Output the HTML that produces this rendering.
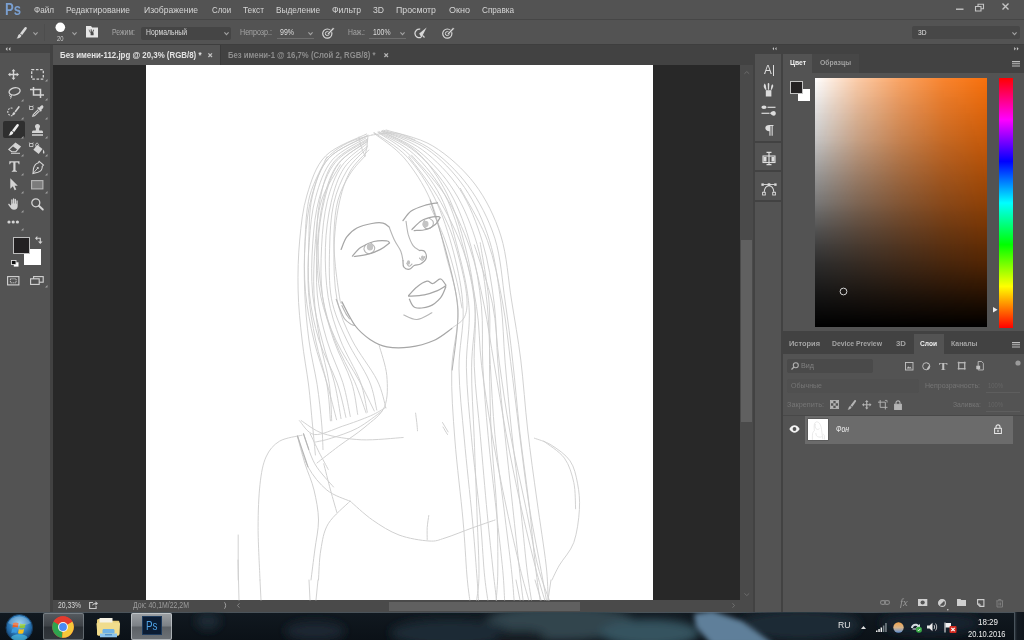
<!DOCTYPE html>
<html lang="ru"><head><meta charset="utf-8"><title>Photoshop</title>
<style>
html,body{margin:0;padding:0;}
body{width:1024px;height:640px;overflow:hidden;background:#535353;position:relative;font-family:"Liberation Sans", sans-serif;}
#r div{position:absolute;}
#t span{position:absolute;white-space:nowrap;line-height:1;transform-origin:0 50%;}
#s svg{position:absolute;overflow:visible;}
</style></head><body>
<div id="r">
<div style="left:0px;top:0px;width:1024px;height:20px;background:#535353;"></div>
<div style="left:0px;top:19.2px;width:1024px;height:1.3px;background:#464646;"></div>
<div style="left:0px;top:21px;width:1024px;height:23px;background:#535353;"></div>
<div style="left:0px;top:44px;width:1024px;height:1px;background:#3e3e3e;"></div>
<div style="left:0px;top:45px;width:53px;height:567px;background:#424242;"></div>
<div style="left:0px;top:45px;width:50px;height:8px;background:#454545;"></div>
<div style="left:0px;top:53px;width:50px;height:559px;background:#535353;"></div>
<div style="left:53px;top:45px;width:702px;height:20px;background:#424242;"></div>
<div style="left:53px;top:45px;width:166.5px;height:20px;background:#535353;"></div>
<div style="left:219.5px;top:45px;width:1px;height:20px;background:#3a3a3a;"></div>
<div style="left:53px;top:65px;width:687px;height:535px;background:#282828;"></div>
<div style="left:146px;top:65.3px;width:506.6px;height:534.7px;background:#ffffff;"></div>
<div style="left:740px;top:65px;width:13px;height:535px;background:#4a4a4a;"></div>
<div style="left:741px;top:240px;width:11px;height:182px;background:#606060;"></div>
<div style="left:53px;top:600px;width:702px;height:12px;background:#4a4a4a;"></div>
<div style="left:389px;top:601.5px;width:191px;height:9px;background:#606060;"></div>
<div style="left:753px;top:45px;width:2px;height:567px;background:#424242;"></div>
<div style="left:755px;top:45px;width:28px;height:9px;background:#424242;"></div>
<div style="left:755px;top:54px;width:26px;height:558px;background:#535353;"></div>
<div style="left:781px;top:45px;width:2px;height:567px;background:#424242;"></div>
<div style="left:783px;top:45px;width:241px;height:9px;background:#424242;"></div>
<div style="left:783px;top:54px;width:241px;height:19px;background:#424242;"></div>
<div style="left:812px;top:54px;width:47px;height:19px;background:#474747;"></div>
<div style="left:783px;top:54px;width:29px;height:19px;background:#535353;"></div>
<div style="left:783px;top:73px;width:241px;height:258px;background:#535353;"></div>
<div style="left:783px;top:331px;width:241px;height:3px;background:#424242;"></div>
<div style="left:783px;top:334px;width:241px;height:20px;background:#424242;"></div>
<div style="left:914px;top:334px;width:30px;height:20px;background:#535353;"></div>
<div style="left:783px;top:354px;width:241px;height:258px;background:#535353;"></div>
<div style="left:43.5px;top:24px;width:1px;height:17px;background:#4d4d4d;"></div>
<div style="left:141px;top:26.5px;width:90px;height:13.5px;background:#454545;border-radius:2px;"></div>
<div style="left:277px;top:38px;width:37px;height:1px;background:#6e6e6e;"></div>
<div style="left:369px;top:38px;width:37px;height:1px;background:#6e6e6e;"></div>
<div style="left:912px;top:26px;width:108px;height:13px;background:#474747;border-radius:2px;"></div>
<div style="left:3px;top:121px;width:22px;height:17px;background:#2f2f2f;border-radius:2px;"></div>
<div style="left:23.5px;top:248.8px;width:17.4px;height:16.4px;background:#ffffff;"></div>
<div style="left:13.7px;top:238px;width:15.4px;height:14.5px;background:#232122;box-shadow:0 0 0 1px #bdbdbd;"></div>
<div style="left:755px;top:141px;width:26px;height:2px;background:#424242;"></div>
<div style="left:755px;top:170px;width:26px;height:2px;background:#424242;"></div>
<div style="left:755px;top:200px;width:26px;height:2px;background:#424242;"></div>
<div style="left:772.8px;top:64.8px;width:1px;height:11px;background:#dcdcdc;"></div>
<div style="left:797.5px;top:88.5px;width:12.5px;height:12.5px;background:#ffffff;"></div>
<div style="left:790.5px;top:81.5px;width:11.5px;height:11px;background:#232122;box-shadow:0 0 0 1px #c4c4c4;"></div>
<div style="left:815px;top:77.5px;width:172px;height:249.5px;background:#f8700c;background-image:linear-gradient(to bottom,rgba(0,0,0,0) 0%,rgba(0,0,0,.20) 25%,rgba(0,0,0,.42) 50%,rgba(0,0,0,.68) 75%,rgba(0,0,0,.88) 90%,#000 100%),linear-gradient(to right,#fff 0%,rgba(255,255,255,.64) 25%,rgba(255,255,255,.36) 50%,rgba(255,255,255,.14) 75%,rgba(255,255,255,0) 100%);"></div>
<div style="left:815px;top:77.5px;width:172px;height:249.5px;background:transparent;background-image:linear-gradient(to bottom,rgba(0,0,0,0) 0%,rgba(0,0,0,.03) 25%,rgba(0,0,0,.19) 50%,rgba(0,0,0,.47) 75%,rgba(0,0,0,.5) 100%);-webkit-mask-image:linear-gradient(to right,#000,transparent);mask-image:linear-gradient(to right,#000,transparent);"></div>
<div style="left:998.5px;top:77.5px;width:14.5px;height:250px;background:#f00;background:linear-gradient(to bottom,#f00 0%,#f0f 16.670%,#00f 33.330%,#0ff 50%,#0f0 66.670%,#ff0 83.330%,#f00 100%);"></div>
<div style="left:787px;top:359px;width:86px;height:13.5px;background:#4a4a4a;border-radius:2px;"></div>
<div style="left:787px;top:379px;width:132px;height:13.5px;background:#505050;border-radius:2px;"></div>
<div style="left:986px;top:392px;width:34px;height:1px;background:#5e5e5e;"></div>
<div style="left:986px;top:411px;width:34px;height:1px;background:#5e5e5e;"></div>
<div style="left:783px;top:415px;width:241px;height:1px;background:#484848;"></div>
<div style="left:805px;top:416px;width:208px;height:27.5px;background:#6b6b6b;"></div>
<div style="left:808px;top:418.5px;width:19.5px;height:21.5px;background:#ffffff;box-shadow:0 0 0 .5px #4a4a4a;"></div>
<div style="left:0px;top:612px;width:1024px;height:28px;background:#0d141a;background:linear-gradient(to bottom,#111920,#0b1117);"></div>
<div style="left:0px;top:611.6px;width:1024px;height:1.2px;background:#4a535a;"></div>
<div style="left:43px;top:613px;width:41px;height:27px;background:#3c4146;border-radius:2px;background:linear-gradient(to bottom,#565b60 0%,#3d4247 48%,#2b3035 52%,#33383d 100%);box-shadow:inset 0 0 0 1px rgba(160,170,178,.45);"></div>
<div style="left:131px;top:613px;width:41px;height:27px;background:#7a7f84;border-radius:2px;background:linear-gradient(to bottom,#9da1a5 0%,#7c8186 48%,#5c6166 52%,#6d7277 100%);box-shadow:inset 0 0 0 1px rgba(215,220,224,.6);"></div>
<div style="left:142px;top:616.3px;width:19.5px;height:18.5px;background:#0b1c33;box-shadow:inset 0 0 0 1px #1d3a5c;"></div>
<div style="left:1014px;top:612px;width:10px;height:28px;background:#1a232b;background:linear-gradient(to right,#3a444c,#141b22 30%,#0f151b);box-shadow:inset 1px 0 0 #4a545c;"></div>
</div>
<div id="s">
<svg style="left:951px;top:0" width="73" height="16" viewBox="0 0 73 16"><g fill="none" stroke="#c4c4c4" stroke-width="1.4"><path d="M5 9.2h7.5"/><path d="M24.5 6.5h5.5v4.5h-5.5z M27 6.5v-2.3h5.5v4.5H30" stroke-width="1.1"/><path d="M51.5 3.5l6 6M57.5 3.5l-6 6"/></g></svg>
<svg style="left:16px;top:27px" width="11" height="12" viewBox="0 0 11 12"><path d="M10.300 0.200c.6.400.7 1.100.3 1.700L6.200 7.900 4 6.400 8.600.5c.5-.6 1.200-.700 1.700-.3z" fill="#d8d8d8"/><path d="M3.7 7.1l1.7 1.2c-.2 1.6-1.6 3-4.9 3.3 1.3-1 1.2-2 1.6-3 .3-.8.9-1.3 1.6-1.5z" fill="#d8d8d8"/></svg>
<svg style="left:33.0px;top:32.0px" width="5" height="3.2" viewBox="0 0 5 3.2"><path d="M0.4 0.4L2.5 2.700 4.600 0.400" fill="none" stroke="#a4a4a4" stroke-width="1.100"/></svg>
<svg style="left:55px;top:22px" width="11" height="11"><circle cx="5.3" cy="5.3" r="4.8" fill="#fff"/></svg>
<svg style="left:72.0px;top:32.0px" width="5" height="3.2" viewBox="0 0 5 3.2"><path d="M0.4 0.4L2.5 2.700 4.600 0.400" fill="none" stroke="#a4a4a4" stroke-width="1.100"/></svg>
<svg style="left:86px;top:26px" width="12" height="12" viewBox="0 0 12 12"><path d="M0 0h5l1.2 1.4H12V11.6H0z" fill="#e6e6e6"/><path d="M3.2 3.5l.9 2.3h.6V3.2l.9.1.3 2.5h.5l.8-2.2.8.3-.9 2.6H7.6v2.8H4.6V6.5H3.9L2.6 3.8z" fill="#4a4a4a"/></svg>
<svg style="left:224.0px;top:31.5px" width="5" height="3.2" viewBox="0 0 5 3.2"><path d="M0.4 0.4L2.5 2.700 4.600 0.400" fill="none" stroke="#a4a4a4" stroke-width="1.100"/></svg>
<svg style="left:307.5px;top:31.5px" width="5" height="3.2" viewBox="0 0 5 3.2"><path d="M0.4 0.4L2.5 2.700 4.600 0.400" fill="none" stroke="#a4a4a4" stroke-width="1.100"/></svg>
<svg style="left:322px;top:26.5px" width="13" height="12" viewBox="0 0 13 12"><g fill="none" stroke="#d8d8d8"><circle cx="5.3" cy="6.6" r="4.6" stroke-width="1.2"/><circle cx="5.3" cy="6.6" r="2" stroke-width="1"/></g><path d="M5 7l6-6.6 1.5 1.3L6.3 8z" fill="#d8d8d8" stroke="#535353" stroke-width=".6"/></svg>
<svg style="left:400.0px;top:31.5px" width="5" height="3.2" viewBox="0 0 5 3.2"><path d="M0.4 0.4L2.5 2.700 4.600 0.400" fill="none" stroke="#a4a4a4" stroke-width="1.100"/></svg>
<svg style="left:414px;top:26.5px" width="14" height="12" viewBox="0 0 14 12"><path d="M6.2 2.2A4.3 4.3 0 1 0 7 10.3" fill="none" stroke="#d8d8d8" stroke-width="1.3"/><path d="M12.6.6L5.2 6.4l2.2 4.3z" fill="#d8d8d8"/><path d="M8.5 8.3l2 2.2" stroke="#d8d8d8" stroke-width="1.2"/></svg>
<svg style="left:442px;top:26.5px" width="13" height="12" viewBox="0 0 13 12"><g fill="none" stroke="#d8d8d8"><circle cx="5.3" cy="6.6" r="4.6" stroke-width="1.2"/><circle cx="5.3" cy="6.6" r="2" stroke-width="1"/></g><path d="M5 7l6-6.6 1.5 1.3L6.3 8z" fill="#d8d8d8" stroke="#535353" stroke-width=".6"/></svg>
<svg style="left:1012.0px;top:31.5px" width="5" height="3.2" viewBox="0 0 5 3.2"><path d="M0.4 0.4L2.5 2.700 4.600 0.400" fill="none" stroke="#a4a4a4" stroke-width="1.100"/></svg>
<svg style="left:5px;top:47px" width="6" height="4" viewBox="0 0 6 4"><path d="M2.4 0L.6 2l1.8 2zM5.4 0L3.6 2l1.8 2z" fill="#c8c8c8"/></svg>
<svg style="left:8px;top:69px" width="11" height="11" viewBox="0 0 11 11"><path d="M5.5 0l2 2.3H6.2v2.5h2.5V3.5L11 5.5 8.7 7.5V6.2H6.2v2.5h1.3L5.5 11 3.5 8.7h1.3V6.2H2.3v1.3L0 5.5l2.3-2V4.8h2.5V2.3H3.5z" fill="#d4d4d4"/></svg>
<svg style="left:31px;top:68.5px" width="13" height="11" viewBox="0 0 13 11"><rect x=".7" y=".7" width="11.6" height="9.4" fill="none" stroke="#d4d4d4" stroke-width="1.3" stroke-dasharray="2.6 1.6"/></svg>
<svg style="left:44.5px;top:78.5px" width="2.5" height="2.5" viewBox="0 0 2.5 2.5"><path d="M2.5 0V2.5H0z" fill="#a0a0a0"/></svg>
<svg style="left:8px;top:87px" width="13" height="12" viewBox="0 0 13 12"><ellipse cx="6.6" cy="4.4" rx="5.6" ry="3.6" fill="none" stroke="#d4d4d4" stroke-width="1.3" transform="rotate(-12 6.6 4.4)"/><path d="M2.6 7.2c-1 .4-1.3 1.3-.6 2 .8.6 1.6.2 1.5-.6-.1-.7-.5-1.3-.9-1.4zM3 9c.2 1 .1 1.800-.5 2.600" fill="none" stroke="#d4d4d4" stroke-width="1"/></svg>
<svg style="left:20.5px;top:98.5px" width="2.5" height="2.5" viewBox="0 0 2.5 2.5"><path d="M2.5 0V2.5H0z" fill="#a0a0a0"/></svg>
<svg style="left:30px;top:86.5px" width="14" height="11" viewBox="0 0 14 11"><path d="M3.500 0v8h10.500M0 2.500h10.500v8.500" fill="none" stroke="#d4d4d4" stroke-width="1.500"/></svg>
<svg style="left:44.5px;top:97.5px" width="2.5" height="2.5" viewBox="0 0 2.5 2.5"><path d="M2.5 0V2.5H0z" fill="#a0a0a0"/></svg>
<svg style="left:7px;top:106px" width="13" height="11" viewBox="0 0 13 11"><path d="M5.500 2.200c-2.500-.7-4.700 1-4.700 3.500 0 2.500 2 4.300 4.500 4" fill="none" stroke="#d4d4d4" stroke-width="1.100" stroke-dasharray="1.800 1.200"/><path d="M12.300.2c.5.300.5.800.2 1.300L8.700 6.400 7.500 5.500 11.200.5c.3-.4.800-.5 1.100-.3zM7 6l1.300 1c-.2 1.300-1.300 2.300-3.800 2.500 1-.8.900-1.500 1.200-2.300.3-.6.700-1 1.300-1.200z" fill="#d4d4d4"/></svg>
<svg style="left:20.5px;top:116.5px" width="2.5" height="2.5" viewBox="0 0 2.5 2.5"><path d="M2.5 0V2.5H0z" fill="#a0a0a0"/></svg>
<svg style="left:29px;top:105px" width="15" height="12" viewBox="0 0 15 12"><path d="M13.800.6c.9.800.8 1.800.1 2.600l-1.700 1.700.7.700-1.100 1.100-3.600-3.600 1.100-1.100.7.700L11.700.9c.7-.7 1.500-.9 2.100-.3z" fill="#d4d4d4"/><path d="M9.300 4.600L4.300 9.600l-.6 1.700 1.800-.500 5-5" fill="none" stroke="#d4d4d4" stroke-width="1.100"/><path d="M.5 1.500h3.500v3H.5zM1 1.500L.3.500M3.500 1.500l.7-1" fill="none" stroke="#d4d4d4" stroke-width=".8"/></svg>
<svg style="left:44.5px;top:116.5px" width="2.5" height="2.5" viewBox="0 0 2.5 2.5"><path d="M2.5 0V2.5H0z" fill="#a0a0a0"/></svg>
<svg style="left:8px;top:123.5px" width="11" height="12" viewBox="0 0 11 12"><path d="M10.300 0.200c.6.400.7 1.100.3 1.700L6.200 7.900 4 6.400 8.600.5c.5-.6 1.200-.700 1.700-.3z" fill="#ececec"/><path d="M3.7 7.1l1.7 1.2c-.2 1.6-1.6 3-4.9 3.3 1.3-1 1.2-2 1.6-3 .3-.8.9-1.3 1.6-1.5z" fill="#ececec"/></svg>
<svg style="left:20.5px;top:135.5px" width="2.5" height="2.5" viewBox="0 0 2.5 2.5"><path d="M2.5 0V2.5H0z" fill="#a0a0a0"/></svg>
<svg style="left:32px;top:123.5px" width="11" height="12" viewBox="0 0 11 12"><path d="M5.500 0c1.500 0 2.500 1 2.500 2.300 0 1-.5 1.500-.8 2.200-.2.500-.1 1.500.1 2.000h2.200c.8 0 1.500.7 1.500 1.500v1.000H0v-1.000c0-.8.700-1.500 1.500-1.500h2.200c.2-.5.300-1.500.1-2.000C3.500 3.800 3 3.300 3 2.300 3 1 4 0 5.500 0zM0 10.200h11v1.500H0z" fill="#d4d4d4"/></svg>
<svg style="left:44.5px;top:135.5px" width="2.5" height="2.5" viewBox="0 0 2.5 2.5"><path d="M2.5 0V2.5H0z" fill="#a0a0a0"/></svg>
<svg style="left:8px;top:143px" width="13" height="11" viewBox="0 0 13 11"><path d="M7.500.3l4.800 3.400-4.500 5H3.800L.8 6.500z" fill="none" stroke="#d4d4d4" stroke-width="1.100"/><path d="M7.500.3l4.800 3.400-2.700 3-4.800-3.400z" fill="#d4d4d4"/><path d="M3 10.300h9" stroke="#d4d4d4" stroke-width="1"/></svg>
<svg style="left:20.5px;top:153.5px" width="2.5" height="2.5" viewBox="0 0 2.5 2.5"><path d="M2.5 0V2.5H0z" fill="#a0a0a0"/></svg>
<svg style="left:29px;top:141.5px" width="16" height="13" viewBox="0 0 16 13"><path d="M.5 1.500h3.500v3H.5zM1 1.500L.3.500M3.500 1.500l.7-1" fill="none" stroke="#d4d4d4" stroke-width=".8"/><path d="M8.200 2.800l5.300 4.200-3.800 5-5.300-4.200z" fill="#d4d4d4"/><path d="M7 4.500c-.8-1.500-.3-3 .8-3.300 1-.2 1.800.8 2 2.500" fill="none" stroke="#d4d4d4" stroke-width=".9"/><path d="M14.300 7.500c.8 1.300 1.300 2.500 1.100 3.500-.2.800-1.200.8-1.400 0-.2-.8 0-2 .3-3.500z" fill="#d4d4d4"/></svg>
<svg style="left:44.5px;top:153.5px" width="2.5" height="2.5" viewBox="0 0 2.5 2.5"><path d="M2.5 0V2.5H0z" fill="#a0a0a0"/></svg>
<svg style="left:9px;top:161px" width="11" height="11" viewBox="0 0 11 11"><path d="M.3.200h10.200v3h-.9c-.1-1-.5-1.700-1.600-1.700H6.500v7.300c0 .8.300 1.100 1.500 1.200v.8H2.800V10c1.200-.1 1.500-.4 1.500-1.200V1.500H2.800c-1.100 0-1.500.7-1.600 1.700H.3z" fill="#d4d4d4"/></svg>
<svg style="left:20.5px;top:172.5px" width="2.5" height="2.5" viewBox="0 0 2.5 2.5"><path d="M2.5 0V2.5H0z" fill="#a0a0a0"/></svg>
<svg style="left:32px;top:161px" width="12" height="13" viewBox="0 0 12 13"><path d="M7.200.3l4.300 3.700-1.300 1.400c.3 2.500-1 4.800-4.300 5.800L1 12.500l.5-5C2.300 4.300 4 2.500 6 2z" fill="none" stroke="#d4d4d4" stroke-width="1.100"/><path d="M1.200 12.300l4-4.600" stroke="#d4d4d4" stroke-width=".9"/><circle cx="5.800" cy="7" r="1.100" fill="#d4d4d4"/></svg>
<svg style="left:44.5px;top:172.5px" width="2.5" height="2.5" viewBox="0 0 2.5 2.5"><path d="M2.5 0V2.5H0z" fill="#a0a0a0"/></svg>
<svg style="left:9.5px;top:178px" width="8" height="12.5" viewBox="0 0 8 12.5"><path d="M.3.300v10.500l2.600-2.600 1.700 4 1.700-.7L4.600 7.700h3.200z" fill="#d4d4d4"/></svg>
<svg style="left:20.5px;top:190.5px" width="2.5" height="2.5" viewBox="0 0 2.5 2.5"><path d="M2.5 0V2.5H0z" fill="#a0a0a0"/></svg>
<svg style="left:31px;top:180px" width="12.5" height="9.5" viewBox="0 0 12.5 9.5"><rect x=".6" y=".6" width="11.300" height="8.300" fill="#7c7c7c" stroke="#b8b8b8" stroke-width="1.100"/></svg>
<svg style="left:44.5px;top:190.5px" width="2.5" height="2.5" viewBox="0 0 2.5 2.5"><path d="M2.5 0V2.5H0z" fill="#a0a0a0"/></svg>
<svg style="left:8px;top:197.5px" width="12" height="12" viewBox="0 0 12 12"><path d="M3.200 6.200V2c0-.9 1.300-.9 1.300 0v3.500h.4V.9c0-.9 1.400-.9 1.400 0v4.600h.4V1.500c0-.9 1.300-.9 1.300 0v4.300h.4V3c0-.9 1.300-.9 1.300 0v5c0 2.300-1.200 3.800-3.700 3.800-1.700 0-2.700-.7-3.500-2L.3 6.800c-.4-.8.600-1.500 1.200-.7l1 1.500z" fill="#d4d4d4"/></svg>
<svg style="left:20.5px;top:209.5px" width="2.5" height="2.5" viewBox="0 0 2.5 2.5"><path d="M2.5 0V2.5H0z" fill="#a0a0a0"/></svg>
<svg style="left:31px;top:198px" width="12.5" height="12" viewBox="0 0 12.5 12"><circle cx="4.800" cy="4.800" r="4" fill="none" stroke="#d4d4d4" stroke-width="1.300"/><path d="M7.800 7.800l4 3.700" stroke="#d4d4d4" stroke-width="1.900" stroke-linecap="round"/></svg>
<svg style="left:7px;top:220px" width="12" height="4" viewBox="0 0 12 4"><circle cx="2" cy="2" r="1.600" fill="#d4d4d4"/><circle cx="6.200" cy="2" r="1.600" fill="#d4d4d4"/><circle cx="10.400" cy="2" r="1.600" fill="#d4d4d4"/></svg>
<svg style="left:20.5px;top:227.5px" width="2.5" height="2.5" viewBox="0 0 2.5 2.5"><path d="M2.5 0V2.5H0z" fill="#a0a0a0"/></svg>
<svg style="left:35px;top:235.5px" width="8" height="8" viewBox="0 0 8 8"><path d="M1.500 2.300h3.800v4" fill="none" stroke="#d4d4d4" stroke-width="1.100"/><path d="M2.300 0v4.600L0 2.300zM3 5.500h4.600L5.300 8z" fill="#d4d4d4"/></svg>
<svg style="left:11px;top:260px" width="8" height="7" viewBox="0 0 8 7"><rect x="2.800" y="2.300" width="4.700" height="4.300" fill="#fff"/><rect x=".5" y=".5" width="4.500" height="4" fill="#111" stroke="#ddd" stroke-width=".9"/></svg>
<svg style="left:7px;top:275.5px" width="12.5" height="9.5" viewBox="0 0 12.5 9.5"><rect x=".6" y=".6" width="11.300" height="8.300" fill="none" stroke="#d4d4d4" stroke-width="1.100"/><rect x="3.400" y="2.800" width="5.700" height="4" fill="none" stroke="#d4d4d4" stroke-width=".9" stroke-dasharray="1.200 .8"/></svg>
<svg style="left:30px;top:276px" width="14" height="9" viewBox="0 0 14 9"><rect x="3.600" y=".6" width="9.600" height="5.600" fill="none" stroke="#d4d4d4" stroke-width="1.100"/><rect x=".6" y="2.800" width="8.600" height="5.600" fill="#535353" stroke="#d4d4d4" stroke-width="1.100"/></svg>
<svg style="left:44.5px;top:284.5px" width="2.5" height="2.5" viewBox="0 0 2.5 2.5"><path d="M2.5 0V2.5H0z" fill="#a0a0a0"/></svg>
<svg style="left:207.8px;top:53px" width="4.4" height="4.4" viewBox="0 0 4.4 4.4"><path d="M.4.4l3.600 3.600M4 .4L.4 4" stroke="#c0c0c0" stroke-width="1.300"/></svg>
<svg style="left:383.6px;top:53px" width="4.4" height="4.4" viewBox="0 0 4.4 4.4"><path d="M.4.4l3.600 3.600M4 .4L.4 4" stroke="#b4b4b4" stroke-width="1.300"/></svg>
<svg style="left:89px;top:601px" width="9" height="8" viewBox="0 0 9 8"><path d="M4 1.500H.6v6h6.500V5" fill="none" stroke="#c8c8c8" stroke-width="1.100"/><path d="M3 5c.3-2 1.500-3 3.500-3V.3L9 2.600 6.500 4.800V3.300C5 3.300 3.800 3.800 3 5z" fill="#c8c8c8"/></svg>
<svg style="left:224px;top:602px" width="3" height="7" viewBox="0 0 3 7"><path d="M.5.3c1.500 2 1.500 4.400 0 6.400" fill="none" stroke="#a0a0a0" stroke-width="1"/></svg>
<svg style="left:237px;top:603px" width="3" height="5" viewBox="0 0 3 5"><path d="M2.500.3L.5 2.500l2 2.200" fill="none" stroke="#8a8a8a" stroke-width=".9"/></svg>
<svg style="left:732px;top:603px" width="3" height="5" viewBox="0 0 3 5"><path d="M.5.300L2.500 2.500.5 4.700" fill="none" stroke="#747474" stroke-width=".9"/></svg>
<svg style="left:744px;top:70.5px" width="5.6" height="3.2" viewBox="0 0 7 4"><path d="M.5 3.500L3.500.7 6.500 3.500" fill="none" stroke="#6c6c6c" stroke-width="1.200"/></svg>
<svg style="left:744px;top:592.5px" width="5.6" height="3.2" viewBox="0 0 7 4"><path d="M.5.5L3.500 3.300 6.500.5" fill="none" stroke="#6c6c6c" stroke-width="1.200"/></svg>
<svg style="left:771.5px;top:47.2px" width="5" height="3.4" viewBox="0 0 6 4"><path d="M2.400 0L.6 2l1.800 2zM5.400 0L3.600 2l1.800 2z" fill="#c8c8c8"/></svg>
<svg style="left:1014px;top:47px" width="5" height="3.6" viewBox="0 0 5 3.6"><path d="M0.2 0l1.700 1.800-1.700 1.800zM2.900 0l1.700 1.800-1.700 1.800z" fill="#c8c8c8"/></svg>
<svg style="left:763px;top:82.5px" width="11" height="14" viewBox="0 0 11 14"><path d="M2.800 7.200h5.600v6.300H2.800z" fill="#dcdcdc"/><path d="M1.800.5c.9 1.200 1.300 2.500 1.300 3.700l.4 2.500H2.300L1 4.500C.4 3 .9 1.500 1.800.5zM5.500 0c.5 0 .8.400.8.900L6.100 6.700H4.900L4.700.9c0-.5.300-.9.800-.9zM9.200 1.200c1 .5 1.300 1.600.9 2.500L8.800 6.700H7.700l.4-2.800c.1-1.200.5-2 1.100-2.700z" fill="#dcdcdc"/></svg>
<svg style="left:761px;top:104.5px" width="15" height="11" viewBox="0 0 15 11"><ellipse cx="3" cy="2.300" rx="2.600" ry="1.700" fill="#dcdcdc"/><path d="M6.500 2.300h8" stroke="#dcdcdc" stroke-width="1.200"/><path d="M.500 8.300h8" stroke="#dcdcdc" stroke-width="1.200"/><path d="M9 8.300c1.200-1.600 2.500-2.400 3.800-2.400 1.200 0 2 1 2 2.400s-.8 2.400-2 2.400c-1.300 0-2.600-.8-3.800-2.400z" fill="#dcdcdc"/></svg>
<svg style="left:765px;top:124.5px" width="9" height="11" viewBox="0 0 9 11"><path d="M4.300 0h4.200v1H7.700v9.700H6.600V1H5.500v9.700H4.400V6.200C2 6.200.3 5 .3 3.100.3 1.200 2 0 4.300 0z" fill="#dcdcdc"/></svg>
<svg style="left:761.5px;top:151px" width="14" height="15" viewBox="0 0 14 15"><rect x="1" y="5" width="12" height="6.500" fill="none" stroke="#dcdcdc" stroke-width="1.100"/><rect x="1.500" y="6" width="3" height="4.500" fill="#dcdcdc"/><rect x="9.500" y="6" width="3" height="4.500" fill="#dcdcdc"/><path d="M7 1v13M4.500 1.300h5M4.500 13.700h5" stroke="#dcdcdc" stroke-width="1.200"/></svg>
<svg style="left:760.5px;top:182.5px" width="16" height="12.5" viewBox="0 0 16 12.5"><path d="M3 9.500C3.500 5 5.500 2.700 8 2.700s4.500 2.300 5 6.800" fill="none" stroke="#dcdcdc" stroke-width="1.100"/><path d="M2.500 1.500h11" stroke="#dcdcdc" stroke-width=".9"/><rect x="6.700" y=".3" width="2.600" height="2.600" fill="#dcdcdc"/><rect x=".4" y=".4" width="2.400" height="2.400" fill="#dcdcdc"/><rect x="13.200" y=".4" width="2.400" height="2.400" fill="#dcdcdc"/><rect x="1.600" y="9.300" width="2.700" height="2.700" fill="none" stroke="#dcdcdc" stroke-width=".9"/><rect x="11.700" y="9.300" width="2.700" height="2.700" fill="none" stroke="#dcdcdc" stroke-width=".9"/></svg>
<svg style="left:1012px;top:61px" width="8" height="6" viewBox="0 0 8 6"><path d="M0 .6h8M0 2.800h8M0 5h8" stroke="#bdbdbd" stroke-width="1.100"/></svg>
<svg style="left:839px;top:286.5px" width="9" height="9" viewBox="0 0 9 9"><circle cx="4.500" cy="4.500" r="3.400" fill="none" stroke="#d0d0d0" stroke-width="1"/></svg>
<svg style="left:992.5px;top:307px" width="5" height="6" viewBox="0 0 5 6"><path d="M0 0l4.600 2.800L0 5.600z" fill="#ececec"/></svg>
<svg style="left:1012px;top:341.5px" width="8" height="6" viewBox="0 0 8 6"><path d="M0 .6h8M0 2.800h8M0 5h8" stroke="#bdbdbd" stroke-width="1.100"/></svg>
<svg style="left:791px;top:361.5px" width="8" height="8" viewBox="0 0 8 8"><circle cx="4.800" cy="3.200" r="2.500" fill="none" stroke="#b0b0b0" stroke-width="1.100"/><path d="M3 5L.5 7.500" stroke="#b0b0b0" stroke-width="1.200"/></svg>
<svg style="left:905px;top:361.5px" width="8.5" height="8.5" viewBox="0 0 10 10"><rect x=".6" y=".6" width="8.800" height="8.800" fill="none" stroke="#c0c0c0" stroke-width="1.100"/><path d="M2 7.500l1.800-2.500 1.200 1.500 1.200-1 1.800 2z" fill="#c0c0c0"/></svg>
<svg style="left:921.5px;top:361.5px" width="8.5" height="8.5" viewBox="0 0 10 10"><circle cx="5" cy="5" r="4.200" fill="none" stroke="#c0c0c0" stroke-width="1.100"/><path d="M5 .8A4.200 4.200 0 0 1 5 9.200L8.800 3z" fill="#c0c0c0"/></svg>
<svg style="left:956.5px;top:361.2px" width="9.5" height="9.5" viewBox="0 0 11 11"><rect x="2" y="2" width="7" height="7" fill="none" stroke="#c0c0c0" stroke-width="1.100"/><path d="M.5 2h10M.5 9h10M2 .5v10M9 .5v10" stroke="#c0c0c0" stroke-width=".7"/></svg>
<svg style="left:975.5px;top:361px" width="7.8" height="9.5" viewBox="0 0 9 11"><path d="M2.500.6h4l2 2v7.800h-6z" fill="none" stroke="#c0c0c0" stroke-width="1"/><rect x=".3" y="5.500" width="4.500" height="4" fill="#c0c0c0"/></svg>
<svg style="left:1015px;top:360px" width="6" height="6" viewBox="0 0 6 6"><circle cx="3" cy="3" r="2.600" fill="#9a9a9a"/></svg>
<svg style="left:830px;top:400px" width="9" height="9" viewBox="0 0 10 10"><rect x=".5" y=".5" width="9" height="9" fill="none" stroke="#b4b4b4" stroke-width="1"/><path d="M1 1h2.700v2.700H1zM6.300 1H9v2.700H6.300zM3.700 3.700h2.600v2.600H3.700zM1 6.300h2.700V9H1zM6.300 6.300H9V9H6.300z" fill="#b4b4b4"/></svg>
<svg style="left:846.5px;top:400px" width="9.35" height="10.2" viewBox="0 0 11 12"><path d="M10.300 0.200c.6.400.7 1.100.3 1.700L6.200 7.900 4 6.400 8.600.5c.5-.6 1.200-.700 1.700-.3z" fill="#b4b4b4"/><path d="M3.7 7.1l1.7 1.2c-.2 1.6-1.6 3-4.9 3.3 1.3-1 1.2-2 1.6-3 .3-.8.9-1.3 1.6-1.5z" fill="#b4b4b4"/></svg>
<svg style="left:861.5px;top:400px" width="9.5" height="9.5" viewBox="0 0 11 11"><path d="M5.500 0l2 2.300H6.200v2.500h2.500V3.500L11 5.500 8.700 7.500V6.200H6.200v2.500h1.300L5.500 11 3.500 8.700h1.300V6.200H2.300v1.300L0 5.500l2.300-2V4.800h2.500V2.300H3.500z" fill="#b4b4b4"/></svg>
<svg style="left:877.5px;top:400px" width="9.5" height="9.5" viewBox="0 0 11 11"><path d="M2.500 0v8.500H11M0 2.500h8.500V11" fill="none" stroke="#b4b4b4" stroke-width="1.100"/><path d="M8 .5l2.500 0 0 2.500" fill="none" stroke="#b4b4b4" stroke-width=".9"/></svg>
<svg style="left:893.5px;top:400px" width="8" height="10" viewBox="0 0 8 10"><path d="M2 4.300V2.800C2 .2 6 .2 6 2.800V4.300" fill="none" stroke="#b4b4b4" stroke-width="1.100"/><rect x=".6" y="4.300" width="6.800" height="5.200" fill="#b4b4b4" stroke="#b4b4b4" stroke-width="1"/></svg>
<svg style="left:788.5px;top:424.5px" width="11" height="8" viewBox="0 0 11 8"><path d="M.3 4C2 1.300 3.800.3 5.500.3S9 1.300 10.700 4C9 6.700 7.200 7.700 5.500 7.700S2 6.700.3 4z" fill="#f2f2f2"/><circle cx="5.500" cy="4" r="1.900" fill="#535353"/></svg>
<svg style="left:808px;top:418.5px" width="19.5" height="21.5" viewBox="0 0 19.5 21.5"><g fill="none" stroke="#d4d4d4" stroke-width=".5"><path d="M8.500 2.800c-2 .5-2.600 3-2.300 6.500l.2 2.500M8.500 2.800c3 0 4.300 3 5 7.500l1.300 10M7.500 5c-.8 1.500-.4 3.500 1 5.200 1.200.5 2.300.2 3-.6M6.300 11.800c-1 .8-1.800 1.600-1.900 4.500v4.500M15.200 15c1 .6 1.400 2 1.200 5.500M7.800 14l.5 2.500c1.500 1.800 3.500 2 5.500 1.200"/></g></svg>
<svg style="left:994px;top:424px" width="8" height="10" viewBox="0 0 8 10"><path d="M2 4.300V2.800C2 .2 6 .2 6 2.800V4.300" fill="none" stroke="#e8e8e8" stroke-width="1.100"/><rect x=".6" y="4.300" width="6.800" height="5.200" fill="none" stroke="#e8e8e8" stroke-width="1"/><rect x="3.400" y="5.800" width="1.200" height="2.300" fill="#e8e8e8"/></svg>
<svg style="left:879.5px;top:600px" width="10" height="5" viewBox="0 0 10 5"><rect x=".5" y=".6" width="5" height="3.800" rx="1.900" fill="none" stroke="#8a8a8a" stroke-width="1.100"/><rect x="4.500" y=".6" width="5" height="3.800" rx="1.900" fill="none" stroke="#8a8a8a" stroke-width="1.100"/></svg>
<svg style="left:917.8px;top:598.8px" width="9.3" height="7" viewBox="0 0 9.3 7"><rect width="9.300" height="7" fill="#cfcfcf"/><circle cx="4.650" cy="3.500" r="2.100" fill="#535353"/></svg>
<svg style="left:938.4px;top:599px" width="8" height="8" viewBox="0 0 8 8"><circle cx="4" cy="4" r="3.400" fill="none" stroke="#cfcfcf" stroke-width="1.100"/><path d="M1.500 6.500A3.400 3.400 0 0 1 6.500 1.500z" fill="#cfcfcf"/></svg>
<svg style="left:947.3px;top:608.5px" width="1.6" height="1.6" viewBox="0 0 1.6 1.6"><circle cx=".8" cy=".8" r=".8" fill="#d0d0d0"/></svg>
<svg style="left:957px;top:599px" width="9" height="7" viewBox="0 0 9 7"><path d="M0 0h3.400l.9 1.100H9V7H0z" fill="#cfcfcf"/></svg>
<svg style="left:977px;top:599.2px" width="7.5" height="8" viewBox="0 0 7.5 8"><path d="M.6.600h6.300v6.800H3L.6 5z" fill="none" stroke="#cfcfcf" stroke-width="1.100"/><path d="M.6 5h2.400v2.400" fill="none" stroke="#cfcfcf" stroke-width=".9"/></svg>
<svg style="left:995.5px;top:599px" width="7.5" height="8.5" viewBox="0 0 7.5 8.5"><path d="M.3 1.800h6.900M2.600 1.500V.5h2.300v1M1 2v6h5.500V2M3 3.500v3M4.600 3.500v3" fill="none" stroke="#7e7e7e" stroke-width="1"/></svg>
<svg style="left:0;top:612px;overflow:hidden" width="1024" height="28" viewBox="0 1 1024 28"><defs><filter id="bl" x="-20%" y="-100%" width="140%" height="300%"><feGaussianBlur stdDeviation="5"/></filter><filter id="bl2" x="-20%" y="-100%" width="140%" height="300%"><feGaussianBlur stdDeviation="2.500"/></filter></defs><g filter="url(#bl)"><ellipse cx="560" cy="12" rx="75" ry="18" fill="#33454e"/><ellipse cx="650" cy="22" rx="50" ry="14" fill="#35525f"/><ellipse cx="800" cy="14" rx="60" ry="16" fill="#1d2b36"/><ellipse cx="450" cy="22" rx="60" ry="14" fill="#1b2934"/><ellipse cx="315" cy="20" rx="30" ry="10" fill="#1a2632"/><ellipse cx="208" cy="10" rx="12" ry="9" fill="#1d2935"/><ellipse cx="930" cy="12" rx="50" ry="12" fill="#17232d"/><ellipse cx="520" cy="26" rx="25" ry="7" fill="#121c24"/></g><g filter="url(#bl2)"><path d="M694 3L712 0 742 10 775 34 712 34 696 16z" fill="#5f7f9a"/></g></svg>
<svg style="left:5px;top:613px" width="29" height="27" viewBox="0 0 29 27"><defs><radialGradient id="og" cx=".5" cy=".35" r=".7"><stop offset="0" stop-color="#7fc4ee"/><stop offset=".55" stop-color="#2a78b8"/><stop offset="1" stop-color="#0d3460"/></radialGradient></defs><circle cx="14.300" cy="14.800" r="13.300" fill="url(#og)" stroke="#173a5c" stroke-width="1"/><path d="M8 10.200c2-.9 3.600-.9 5.600 0l-.9 4.300c-1.800-.8-3.300-.8-5.200 0z" fill="#e8612c"/><path d="M15 10.400c2 .9 3.600.9 5.600 0l-.9 4.300c-1.800.8-3.300.8-5.200 0z" fill="#8dc63f"/><path d="M7.200 15.800c1.900-.8 3.400-.8 5.200 0l-.9 4.200c-1.800-.8-3.300-.8-5.200 0z" fill="#3a9be0"/><path d="M13.900 16c1.800.8 3.300.8 5.200 0l-.9 4.200c-1.800.8-3.300.8-5.200 0z" fill="#f9c11c"/><path d="M3 10A13 13 0 0 1 25.600 10C19 13.500 9.600 13.500 3 10z" fill="rgba(255,255,255,.22)"/><ellipse cx="14.300" cy="24.500" rx="8" ry="3.200" fill="rgba(90,215,245,.55)"/></svg>
<svg style="left:52px;top:616px" width="22" height="22" viewBox="-11 -11 22 22"><circle r="10.800" fill="#e33b2e"/><path d="M0 0L-9.350 -5.400A10.800 10.800 0 0 0 -0.900 10.760z" fill="#2ea44f"/><path d="M0 0L-0.900 10.760A10.800 10.800 0 0 0 9.350 -5.400z" fill="#f7c83a"/><path d="M0 0L9.350 -5.400A10.800 10.800 0 0 0 -9.350 -5.400z" fill="#e33b2e"/><path d="M0 -5.400H9.350" stroke="#e33b2e" stroke-width="0"/><circle r="5" fill="#f4f4f4"/><circle r="3.900" fill="#4a8af4"/></svg>
<svg style="left:95.500px;top:616.500px" width="25" height="21" viewBox="0 0 25 21"><path d="M1 3.500C1 2.500 1.700 2 2.500 2H8l1.500 1.800H22c.9 0 1.500.6 1.500 1.500V17c0 .9-.6 1.500-1.500 1.500H2.500C1.700 18.500 1 18 1 17z" fill="#e8cf7a"/><path d="M3.500 1h13v5h-13z" fill="#f7f3e4"/><path d="M.5 7C.5 6 1.200 5.500 2 5.500h20.500c.8 0 1.500.5 1.500 1.500l-.8 10c-.1.900-.7 1.500-1.500 1.500H2.800c-.8 0-1.400-.6-1.500-1.500z" fill="#f0dc8c"/><path d="M6.500 13.500c0-1 .6-1.500 1.500-1.500h9c.9 0 1.500.5 1.500 1.500v3H6.500z" fill="#6fb2e4"/><path d="M4 16.500h17v3.800H4z" fill="#8cc4ec"/><path d="M9 17.800h7" stroke="#3f7fb5" stroke-width="1"/></svg>
<svg style="left:861px;top:626px" width="5" height="3" viewBox="0 0 5 3"><path d="M2.500 0L5 3H0z" fill="#e0e0e0"/></svg>
<svg style="left:875.5px;top:622.5px" width="11" height="9" viewBox="0 0 11 9"><path d="M0 7.500h1.500V9H0zM2.300 6h1.500v3H2.300zM4.600 4.500h1.500V9H4.600z" fill="#f0f0f0"/><path d="M6.900 2.500h1.500V9H6.900zM9.200 0h1.500v9H9.200z" fill="#7c858c"/></svg>
<svg style="left:892.500px;top:621.500px" width="11" height="11" viewBox="0 0 11 11"><defs><linearGradient id="cg" x1="0" y1="0" x2="0" y2="1"><stop offset="0" stop-color="#f0a24a"/><stop offset=".5" stop-color="#d8b48a"/><stop offset="1" stop-color="#5f8fd0"/></linearGradient></defs><circle cx="5.500" cy="5.500" r="5.200" fill="url(#cg)"/></svg>
<svg style="left:910px;top:622px" width="13" height="11" viewBox="0 0 13 11"><path d="M1 6c0-2.500 2-4.300 4.500-4.300 1.300 0 2.400.5 3.200 1.300l1.300-1v4H6l1.400-1.400C6.900 4 6.200 3.700 5.500 3.700 4 3.700 3 4.700 3 6z" fill="#d6dde2"/><path d="M2.500 7h4" stroke="#c9d2d8" stroke-width="1.200"/><circle cx="9" cy="7.800" r="3" fill="#37a844"/><path d="M7.600 7.800l1 1 1.800-2" fill="none" stroke="#fff" stroke-width=".9"/></svg>
<svg style="left:927px;top:622px" width="11" height="10" viewBox="0 0 11 10"><path d="M0 3.500h2.500L5.500.8v8.400L2.500 6.500H0z" fill="#e8e8e8"/><path d="M7 3c.8.800.8 3.200 0 4M8.500 1.500c1.600 1.700 1.600 5.300 0 7" fill="none" stroke="#d0d0d0" stroke-width=".9"/></svg>
<svg style="left:944px;top:621.5px" width="13" height="11" viewBox="0 0 13 11"><path d="M1 .5v10" stroke="#e8e8e8" stroke-width="1.100"/><path d="M1.500 1h5.500v4.500H1.500z" fill="#f2f2f2"/><rect x="5.500" y="4" width="7" height="7" rx="1" fill="#d22a20"/><path d="M7.300 5.800l3.400 3.400M10.700 5.800L7.300 9.200" stroke="#fff" stroke-width="1.200"/></svg>
<svg style="left:146px;top:65px" width="507" height="535" viewBox="146 65 507 535" fill="none" stroke-linecap="round" stroke-linejoin="round"><defs><filter id="pb" x="-5%" y="-5%" width="110%" height="110%"><feGaussianBlur stdDeviation=".45"/></filter></defs><g filter="url(#pb)"><path stroke="#cdcdcd" stroke-width=".9" d="M373.6 133.0C378.7 137.2 394.7 146.8 404.2 158.0C413.6 169.2 423.4 183.8 430.4 200.0C437.3 216.2 441.4 236.7 446.0 255.0C450.6 273.3 457.1 290.8 458.1 310.0C459.0 329.2 452.2 348.3 451.7 370.0C451.2 391.7 453.0 415.0 454.9 440.0C456.8 465.0 461.0 497.5 463.0 520.0C465.0 542.5 465.8 561.7 466.9 575.0C468.0 588.3 469.3 595.8 469.8 600.0 M374.3 132.7C379.8 136.7 396.9 145.7 407.0 156.7C417.1 167.6 426.9 182.2 434.7 198.2C442.5 214.3 448.9 234.4 453.7 252.9C458.4 271.3 462.2 289.6 463.1 308.9C464.0 328.2 458.8 347.2 459.0 368.9C459.2 390.6 462.1 414.1 464.3 438.9C466.5 463.7 470.1 495.3 472.2 517.8C474.3 540.3 475.7 560.2 476.7 573.9C477.8 587.6 478.2 595.6 478.5 600.0 M377.8 132.3C383.2 136.2 399.4 144.6 409.9 155.3C420.4 166.0 432.6 180.5 440.6 196.4C448.7 212.4 453.5 232.2 458.3 250.8C463.0 269.3 467.8 288.3 469.1 307.8C470.5 327.3 466.0 346.1 466.4 367.8C466.8 389.4 469.3 413.1 471.5 437.8C473.8 462.4 477.8 493.1 480.0 515.6C482.1 538.1 483.0 558.7 484.3 572.8C485.6 586.9 487.2 595.5 487.8 600.0 M378.3 132.0C384.2 135.7 402.6 143.6 413.7 154.0C424.8 164.4 436.5 178.9 444.8 194.7C453.1 210.4 458.6 230.0 463.6 248.7C468.6 267.3 473.2 287.0 474.9 306.7C476.7 326.3 473.4 345.0 474.3 366.7C475.2 388.3 478.3 412.2 480.4 436.7C482.6 461.1 485.0 490.8 487.2 513.3C489.3 535.8 491.7 557.2 493.2 571.7C494.8 586.1 496.0 595.3 496.5 600.0 M379.2 131.7C385.4 135.2 404.7 142.5 416.5 152.7C428.4 162.9 441.2 177.2 450.3 192.9C459.3 208.5 465.8 227.8 471.0 246.6C476.2 265.3 479.4 285.7 481.4 305.6C483.4 325.4 481.7 343.9 482.8 365.6C484.0 387.2 485.8 411.3 488.1 435.6C490.3 459.8 493.9 488.6 496.3 511.1C498.8 533.6 501.4 555.7 502.8 570.6C504.1 585.4 504.3 595.1 504.6 600.0 M381.8 131.3C388.0 134.7 407.0 141.4 419.1 151.3C431.2 161.3 444.6 175.6 454.2 191.1C463.9 206.6 471.6 225.6 477.1 244.4C482.5 263.3 485.0 284.4 487.2 304.4C489.4 324.4 489.0 342.8 490.3 364.4C491.6 386.1 492.6 410.4 494.9 434.4C497.2 458.5 501.2 486.4 504.0 508.9C506.7 531.4 509.7 554.3 511.4 569.4C513.1 584.6 513.6 594.9 514.1 600.0 M382.9 131.0C389.5 134.2 409.7 140.3 422.6 150.0C435.4 159.7 449.8 173.9 459.8 189.3C469.8 204.7 476.8 223.3 482.6 242.3C488.3 261.3 491.6 283.2 494.2 303.3C496.7 323.5 496.1 341.7 497.9 363.3C499.7 385.0 502.3 409.4 504.8 433.3C507.3 457.2 510.3 484.2 512.7 506.7C515.1 529.2 517.6 552.8 519.3 568.3C521.0 583.9 522.4 594.7 523.1 600.0 M382.3 130.7C389.6 133.7 412.8 139.2 426.5 148.7C440.2 158.1 454.1 172.3 464.6 187.6C475.1 202.8 483.4 221.1 489.4 240.2C495.4 259.3 498.1 281.9 500.8 302.2C503.4 322.6 503.3 340.6 505.1 362.2C507.0 383.9 509.2 408.5 511.7 432.2C514.2 455.9 517.7 481.9 520.2 504.4C522.7 526.9 524.9 551.3 526.7 567.2C528.6 583.1 530.6 594.5 531.4 600.0 M383.9 130.3C391.2 133.2 414.1 138.1 428.1 147.3C442.1 156.6 456.9 170.6 468.1 185.8C479.2 200.9 488.6 218.9 494.8 238.1C500.9 257.3 502.1 280.6 505.1 301.1C508.1 321.6 510.3 339.4 512.7 361.1C515.2 382.8 517.1 407.6 519.7 431.1C522.4 454.6 526.2 479.7 528.8 502.2C531.4 524.7 533.6 549.8 535.4 566.1C537.3 582.4 539.3 594.4 540.1 600.0 M386.1 130.0C393.9 132.7 418.1 137.0 432.9 146.0C447.7 155.0 463.4 169.0 474.8 184.0C486.1 199.0 494.8 216.7 500.9 236.0C507.0 255.3 508.1 279.3 511.5 300.0C514.8 320.7 518.1 338.3 520.8 360.0C523.5 381.7 525.0 406.7 527.7 430.0C530.3 453.3 533.8 477.5 536.9 500.0C540.0 522.5 544.2 548.3 546.1 565.0C548.0 581.7 547.8 594.2 548.2 600.0 M408.9 156.5C413.7 163.2 428.6 181.2 437.6 196.7C446.6 212.2 456.5 231.3 463.0 249.6C469.5 267.9 473.4 287.1 476.5 306.4C479.7 325.7 479.0 344.2 481.6 365.6C484.2 387.0 488.0 411.1 492.1 434.8C496.3 458.6 501.8 485.9 506.5 508.1C511.2 530.4 516.4 553.0 520.1 568.3C523.8 583.6 527.3 594.7 528.7 600.0 M411.5 155.1C417.0 161.7 435.1 179.4 444.8 194.8C454.5 210.1 463.1 228.7 469.6 247.1C476.1 265.4 479.9 285.4 484.0 304.9C488.1 324.4 490.5 342.7 494.2 364.1C497.9 385.4 501.7 409.7 506.0 433.2C510.4 456.6 515.6 482.4 520.5 504.6C525.4 526.8 531.2 550.5 535.2 566.4C539.2 582.3 543.1 594.4 544.7 600.0 M474.3 244.9C477.4 254.7 488.3 284.2 492.5 303.9C496.6 323.6 496.4 341.7 499.4 363.1C502.3 384.5 505.8 409.0 510.0 432.3C514.3 455.7 520.3 480.9 524.9 503.1C529.6 525.4 533.8 549.6 537.8 565.8C541.9 581.9 547.3 594.3 549.2 600.0 M381.3 131.5C387.4 135.0 406.7 142.2 417.6 152.5C428.6 162.9 438.8 177.5 446.8 193.4C454.8 209.3 460.9 229.1 465.6 248.0C470.3 266.9 474.0 286.9 475.0 306.8C476.0 326.6 471.7 345.4 471.6 367.2C471.4 389.0 473.2 412.8 474.2 437.7C475.1 462.5 476.3 493.6 477.1 516.2C477.9 538.9 479.1 559.6 479.0 573.6C479.0 587.5 477.1 595.6 476.7 600.0 M480.2 242.7C481.7 252.9 487.7 283.7 489.2 304.0C490.8 324.3 489.1 342.7 489.5 364.5C489.8 386.3 490.1 410.6 491.3 435.0C492.5 459.4 495.8 488.3 496.8 511.0C497.9 533.7 497.9 556.2 497.8 571.0C497.7 585.8 496.5 595.2 496.2 600.0 M460.4 188.4C464.9 197.1 480.4 221.6 487.4 240.6C494.4 259.5 498.6 281.8 502.5 302.0C506.3 322.2 507.8 340.1 510.6 361.7C513.4 383.2 516.2 407.9 519.2 431.3C522.2 454.7 525.0 479.5 528.5 501.9C532.0 524.2 537.2 549.2 540.2 565.6C543.2 581.9 545.4 594.3 546.4 600.0 M366.5 134.0C359.6 137.7 335.4 145.8 325.5 156.0C315.5 166.2 311.3 181.0 307.0 195.0C302.7 209.0 301.2 224.2 299.7 240.0C298.2 255.8 297.7 273.3 298.1 290.0C298.4 306.7 300.3 324.2 302.1 340.0C303.8 355.8 306.8 370.8 308.6 385.0C310.3 399.2 311.4 413.3 312.5 425.0C313.7 436.7 314.9 450.0 315.4 455.0 M367.2 136.0C360.8 139.7 338.1 148.0 328.9 158.0C319.7 168.0 315.7 182.4 311.7 196.2C307.8 210.1 306.4 225.4 305.2 241.2C304.0 257.1 304.1 274.8 304.7 291.2C305.3 307.7 306.8 324.5 308.9 340.0C310.9 355.5 314.9 370.6 317.1 384.4C319.2 398.2 320.6 412.0 321.6 422.9C322.6 433.8 322.8 445.2 323.0 449.6 M365.9 138.0C360.3 141.7 340.6 150.1 332.2 160.0C323.9 169.9 319.4 183.8 315.6 197.5C311.7 211.2 310.4 226.7 309.2 242.5C308.0 258.3 307.4 276.2 308.5 292.5C309.5 308.8 312.5 324.8 315.6 340.0C318.6 355.2 324.4 370.3 326.8 383.8C329.3 397.2 329.8 414.6 330.4 420.8 M367.6 140.0C362.2 143.7 343.6 152.2 335.6 162.0C327.5 171.8 322.9 185.1 319.1 198.8C315.3 212.4 313.8 227.9 312.7 243.8C311.6 259.6 311.1 277.7 312.6 293.8C314.1 309.8 318.3 325.1 322.0 340.0C325.6 354.9 331.4 370.0 334.5 383.1C337.7 396.2 339.9 412.7 341.0 418.6 M366.8 142.0C362.0 145.7 345.0 154.3 337.8 164.0C330.6 173.7 326.8 186.5 323.4 200.0C320.0 213.5 318.5 229.2 317.4 245.0C316.4 260.8 315.8 279.2 317.3 295.0C318.9 310.8 322.5 325.4 326.8 340.0C331.0 354.6 338.9 369.8 342.8 382.5C346.7 395.2 349.1 410.8 350.3 416.5 M366.5 144.0C362.4 147.7 348.2 156.5 341.7 166.0C335.1 175.5 330.7 187.9 327.3 201.2C324.0 214.6 322.4 230.4 321.6 246.2C320.8 262.1 320.4 280.6 322.5 296.2C324.5 311.9 328.9 325.7 333.7 340.0C338.5 354.3 347.4 369.5 351.4 381.9C355.4 394.3 356.6 409.0 357.7 414.4 M367.8 146.0C363.8 149.7 350.2 158.6 344.1 168.0C337.9 177.4 334.2 189.2 331.1 202.5C328.0 215.8 325.8 231.7 325.4 247.5C324.9 263.3 325.7 282.1 328.2 297.5C330.7 312.9 335.1 326.0 340.4 340.0C345.7 354.0 355.7 369.2 360.2 381.2C364.6 393.3 366.1 407.1 367.3 412.2 M367.2 148.0C363.9 151.7 352.8 160.7 347.2 170.0C341.6 179.3 336.6 190.6 333.6 203.8C330.7 216.9 329.9 232.9 329.6 248.8C329.2 264.6 328.7 283.5 331.5 298.8C334.4 314.0 340.4 326.4 346.7 340.0C353.0 353.6 364.1 368.9 369.1 380.6C374.1 392.3 375.5 405.2 376.8 410.1 M368.8 150.0C365.6 153.7 354.8 162.8 349.8 172.0C344.8 181.2 341.5 192.0 338.8 205.0C336.2 218.0 334.3 234.2 334.0 250.0C333.7 265.8 334.1 285.0 337.1 300.0C340.1 315.0 345.4 326.7 352.0 340.0C358.7 353.3 371.4 368.7 377.0 380.0C382.7 391.3 384.4 403.3 385.9 408.0 M367.0 135.6C360.6 139.4 337.7 148.2 328.6 158.4C319.5 168.6 315.5 183.0 312.2 197.0C308.9 211.0 309.3 226.5 308.8 242.5C308.4 258.5 307.7 276.8 309.3 293.0C311.0 309.2 314.3 325.0 318.9 340.0C323.6 355.0 332.6 370.1 337.1 383.0C341.6 395.9 344.5 411.6 345.9 417.4 M367.7 138.8C362.0 142.7 341.7 151.9 333.8 162.0C325.8 172.1 323.0 185.6 320.1 199.5C317.2 213.4 316.5 229.2 316.6 245.2C316.7 261.3 317.4 280.2 320.7 296.0C323.9 311.8 329.5 325.8 335.9 340.0C342.4 354.2 353.0 369.4 359.4 381.2C365.8 393.1 371.8 406.0 374.3 411.0 M327.1 156.7C324.2 163.2 313.4 181.8 309.7 195.9C306.1 210.0 305.7 225.3 305.0 241.3C304.3 257.3 304.0 275.3 305.5 291.8C307.0 308.2 310.2 324.7 313.8 340.0C317.4 355.3 323.3 370.4 327.1 383.7C330.8 397.0 335.0 413.8 336.6 419.8 M340.3 164.8C337.2 170.7 325.9 186.7 321.7 200.0C317.5 213.3 316.4 228.8 315.2 244.5C313.9 260.2 313.2 278.1 314.0 294.0C314.7 309.9 317.3 325.1 319.8 340.0C322.4 354.9 327.2 370.0 329.2 383.5C331.2 397.0 331.3 414.5 331.7 420.8 M367.4 141.2C362.6 145.0 345.7 154.0 338.5 163.8C331.3 173.6 327.8 186.6 324.4 200.2C321.0 213.9 318.5 229.7 318.2 245.6C317.8 261.6 319.7 280.3 322.4 296.0C325.2 311.7 329.3 325.7 334.7 340.0C340.0 354.3 349.3 369.5 354.6 381.6C359.8 393.8 364.2 407.7 366.1 412.9 M359.0 137.0C359.3 138.5 360.0 142.8 361.0 146.0C362.0 149.2 364.3 154.3 365.0 156.0 M368.0 135.0C367.8 136.8 367.5 142.5 367.0 146.0C366.5 149.5 365.3 154.3 365.0 156.0 M365.0 156.0C362.5 159.0 354.5 166.7 350.0 174.0C345.5 181.3 340.7 190.3 338.0 200.0C335.3 209.7 334.5 221.7 334.0 232.0C333.5 242.3 334.0 250.7 335.0 262.0C336.0 273.3 338.8 293.3 340.0 300.0C341.2 306.7 341.7 301.7 342.0 302.0 M325.0 160.0C326.8 158.3 331.5 153.2 336.0 150.0C340.5 146.8 346.0 143.5 352.0 141.0C358.0 138.5 368.7 136.0 372.0 135.0 M372.0 135.0C375.8 134.7 387.8 132.2 395.0 133.0C402.2 133.8 411.7 138.8 415.0 140.0 M437.0 202.0C439.3 207.0 446.8 220.7 451.0 232.0C455.2 243.3 459.3 258.7 462.0 270.0C464.7 281.3 466.7 292.0 467.0 300.0C467.3 308.0 466.5 313.3 464.0 318.0C461.5 322.7 454.0 326.3 452.0 328.0 M430.0 206.0C432.5 211.7 440.7 228.0 445.0 240.0C449.3 252.0 453.2 266.7 456.0 278.0C458.8 289.3 461.0 303.0 462.0 308.0 M385.6 407.5C383.1 408.9 377.8 412.6 370.6 415.8C363.4 418.9 351.9 423.1 342.5 426.2C333.1 429.4 321.6 435.4 314.4 434.5C307.2 433.6 301.9 422.9 299.4 420.6 M381.9 411.2C377.8 414.1 365.9 423.6 357.5 428.1C349.1 432.6 338.2 435.9 331.2 438.2C324.2 440.6 318.1 441.4 315.5 442.0 M301.2 420.6C305.0 422.8 313.8 430.6 323.8 433.8C333.8 436.9 348.0 439.1 361.2 439.8C374.5 440.4 396.2 437.9 403.2 437.5 M302.0 435.2C298.2 436.2 285.5 437.6 279.5 441.2C273.5 444.9 269.2 449.8 266.0 457.0C262.8 464.2 261.3 472.6 260.0 484.4C258.7 496.1 258.1 511.6 258.1 527.5C258.1 543.4 259.7 571.2 260.0 580.0 M238.2 535.0 L238.2 580.0 M534.4 438.2C537.2 439.4 545.3 441.2 551.2 445.0C557.2 448.8 565.6 454.4 570.0 460.8C574.4 467.1 575.9 475.1 577.5 483.2C579.1 491.4 580.0 499.6 579.4 509.5C578.8 519.4 577.1 533.2 573.8 542.5C570.4 551.8 563.1 558.8 559.5 565.0C555.9 571.2 553.2 577.5 552.0 580.0 M543.8 441.2C547.2 444.1 559.4 451.2 564.4 458.1C569.4 465.0 571.9 474.1 573.8 482.5C575.6 490.9 575.3 504.4 575.6 508.8 M442.5 422.5 L448.1 431.9 M318.0 580.0 L316.0 600.0 M309.0 580.0 L310.0 600.0 M260.0 580.0 L261.0 600.0 M238.0 560.0 L239.0 600.0 M551.0 580.0 L548.0 600.0 M516.0 580.0 L520.0 600.0 M535.0 580.0 L541.0 600.0"/><path stroke="#d0d0d0" stroke-width="1" d="M379.2 345.6C380.5 350.6 385.9 365.4 386.8 375.6C387.6 385.8 388.1 398.2 384.5 406.8C380.9 415.3 372.6 420.4 365.0 427.0C357.4 433.6 346.8 440.1 338.8 446.1C330.8 452.1 320.6 460.2 317.0 463.0 M297.5 436.0C299.2 441.1 303.1 457.8 308.0 466.8C312.9 475.8 319.8 484.2 326.8 490.0C333.8 495.8 346.1 499.4 350.0 501.2 M303.5 433.8C305.4 438.8 309.8 454.9 314.8 463.8C319.8 472.6 330.4 483.1 333.5 487.0 M310.2 433.8C311.8 436.9 316.2 446.6 319.2 452.5C322.2 458.4 326.8 466.6 328.2 469.4 M297.5 436.8C298.8 441.2 302.2 454.9 305.0 463.8C307.8 472.6 311.8 480.6 314.0 490.0C316.2 499.4 318.4 510.0 318.5 520.0C318.6 530.0 316.0 540.0 314.8 550.0C313.5 560.0 311.6 575.0 311.0 580.0 M350.0 501.2C346.4 505.0 333.1 515.6 328.2 523.8C323.4 531.9 322.4 540.6 320.8 550.0C319.1 559.4 318.9 575.0 318.5 580.0 M323.8 463.8C324.9 468.1 328.3 481.9 330.5 490.0C332.7 498.1 335.8 508.8 336.9 512.5 M350.0 501.0C353.8 504.2 364.3 514.3 372.5 520.0C380.7 525.7 389.6 531.5 399.0 535.0C408.4 538.5 421.3 540.5 429.0 541.0C436.7 541.5 437.8 540.2 445.0 538.0C452.2 535.8 463.7 531.0 472.0 528.0C480.3 525.0 491.2 521.3 495.0 520.0 M428.8 515.5C428.5 517.5 427.5 523.5 427.2 527.5C427.0 531.5 427.2 537.5 427.2 539.5 M415.6 413.1C415.8 414.7 416.4 419.6 416.8 422.5C417.1 425.4 417.4 429.4 417.5 430.8 M443.0 427.0C443.4 427.6 444.5 429.5 445.2 430.8C446.0 432.0 447.1 433.9 447.5 434.5"/><path stroke="#b6b6b6" stroke-width="1.1" d="M430.2 200.0C433.0 209.2 442.3 236.7 446.9 255.0C451.5 273.3 457.0 290.8 457.8 310.0C458.7 329.2 453.1 360.0 452.2 370.0 M336.2 299.2C336.8 300.6 337.9 304.2 339.2 307.5C340.6 310.8 342.5 315.9 344.5 318.8C346.5 321.6 349.5 323.2 351.2 324.4C353.0 325.5 354.4 325.3 355.0 325.5 M341.9 305.6C342.5 306.9 344.4 310.9 345.6 313.1C346.9 315.3 348.8 317.8 349.4 318.8 M365.5 244.9C365.2 245.6 363.6 247.9 364.0 249.4C364.4 250.8 366.2 253.1 367.8 253.5C369.2 253.9 371.9 253.1 373.0 252.0C374.1 250.9 374.9 248.2 374.5 246.8C374.1 245.2 371.4 243.6 370.8 243.0 M424.4 220.5C424.2 221.2 422.8 223.6 423.2 225.0C423.7 226.4 425.5 228.5 427.0 228.8C428.5 229.0 431.2 227.8 432.2 226.5C433.2 225.2 433.5 222.6 433.0 221.2C432.5 219.9 429.9 218.8 429.2 218.2 M389.5 228.0C390.3 230.0 392.5 236.1 394.4 240.0C396.2 243.9 399.3 247.8 400.8 251.2C402.2 254.7 402.6 259.1 403.0 260.6 M406.0 221.2C406.4 223.4 407.1 230.3 408.2 234.4C409.4 238.4 411.2 242.9 413.1 245.6C415.0 248.3 418.4 249.7 419.5 250.5 M406.8 263.2C407.1 263.8 408.1 266.1 409.0 266.2C409.9 266.4 411.5 264.4 412.0 264.0 M419.5 258.0C420.0 258.4 421.6 260.5 422.5 260.2C423.4 260.0 424.4 257.1 424.8 256.5 M403.8 315.0C405.9 315.8 412.2 319.9 416.9 319.5C421.6 319.1 429.4 313.9 431.9 312.8 M297.5 436.0C298.4 438.8 301.4 447.4 303.1 452.5C304.9 457.6 307.2 464.4 308.0 466.8 M303.5 433.8 L308.8 449.5"/><path stroke="#a6a6a6" stroke-width="1.25" d="M341.9 301.9C344.1 305.8 350.3 319.2 355.0 325.5C359.7 331.8 364.7 335.8 370.0 339.4C375.3 342.9 380.3 345.6 386.9 346.9C393.4 348.2 401.6 348.3 409.4 347.2C417.2 346.2 426.7 343.6 433.8 340.5C440.8 337.4 448.8 330.5 451.8 328.5 M341.1 249.4C342.1 247.3 344.1 240.6 346.8 237.0C349.4 233.4 352.7 230.2 356.9 228.0C361.1 225.8 367.5 224.3 371.9 223.5C376.2 222.7 380.2 222.5 383.1 223.1C386.1 223.8 388.4 226.6 389.5 227.2 M403.0 220.5C404.4 218.9 407.7 213.6 411.2 211.1C414.8 208.6 420.0 206.9 424.4 205.5C428.8 204.1 435.3 203.3 437.5 202.9 M352.4 256.1C353.8 254.7 357.1 249.9 360.6 247.5C364.2 245.1 369.4 242.6 373.8 241.5C378.1 240.4 384.2 240.5 386.9 240.8C389.5 241.0 389.1 242.6 389.5 243.0 M354.2 256.5C356.6 256.1 363.8 255.4 368.1 254.2C372.5 253.1 377.1 251.2 380.5 249.4C383.9 247.6 387.4 244.4 388.8 243.4 M412.0 229.5C413.6 228.0 418.2 222.6 421.8 220.5C425.2 218.4 430.1 217.4 433.0 216.8C435.9 216.1 438.3 216.8 439.4 216.8 M414.2 230.6C416.2 230.4 422.7 230.6 426.2 229.5C429.8 228.4 433.3 226.2 435.6 224.2C437.9 222.2 439.4 218.6 440.1 217.5 M403.0 260.6C403.1 261.7 402.7 265.6 403.8 267.0C404.8 268.4 407.6 269.5 409.4 269.2C411.1 269.0 412.4 266.4 414.2 265.5C416.1 264.6 418.6 265.2 420.6 264.0C422.6 262.8 425.6 260.1 426.2 258.0C426.9 255.9 425.5 252.5 424.4 251.2C423.2 250.0 420.3 250.6 419.5 250.5 M408.6 295.5C410.0 294.1 413.8 289.2 416.9 286.9C419.9 284.5 424.3 281.8 427.0 281.2C429.7 280.7 430.8 283.9 433.0 283.5C435.2 283.1 438.4 278.8 440.5 279.0C442.6 279.2 444.9 284.0 445.8 285.0 M408.6 296.2C411.2 296.0 419.6 295.7 424.4 294.8C429.2 293.8 433.9 292.1 437.5 290.6C441.1 289.1 444.4 286.6 445.8 285.8 M409.4 299.2C410.3 300.6 411.7 306.3 415.0 307.5C418.3 308.7 425.0 308.0 429.2 306.4C433.5 304.8 437.8 301.0 440.5 297.8C443.2 294.5 444.9 288.7 445.8 286.9"/><ellipse cx="370" cy="247" rx="3.2" ry="3.400" fill="#c4c4c4"/><ellipse cx="425.500" cy="224" rx="3" ry="3.200" fill="#c4c4c4"/><ellipse cx="408.500" cy="262.500" rx="1.600" ry="2.200" fill="#c0c0c0"/><ellipse cx="422.500" cy="257.500" rx="1.500" ry="2" fill="#c0c0c0"/></g></svg>
</div>
<div id="t">
<span style="left:5px;top:1.5px;font-size:16px;color:#7a9fd0;font-weight:bold;font-style:normal;transform:scaleX(0.8172);">Ps</span>
<span style="left:33.5px;top:5.5px;font-size:9.2px;color:#d6d6d6;font-weight:normal;font-style:normal;transform:scaleX(0.8852);">Файл</span>
<span style="left:65.5px;top:5.5px;font-size:9.2px;color:#d6d6d6;font-weight:normal;font-style:normal;transform:scaleX(0.9143);">Редактирование</span>
<span style="left:143.5px;top:5.5px;font-size:9.2px;color:#d6d6d6;font-weight:normal;font-style:normal;transform:scaleX(0.9330);">Изображение</span>
<span style="left:211.5px;top:5.5px;font-size:9.2px;color:#d6d6d6;font-weight:normal;font-style:normal;transform:scaleX(0.8503);">Слои</span>
<span style="left:243px;top:5.5px;font-size:9.2px;color:#d6d6d6;font-weight:normal;font-style:normal;transform:scaleX(0.9075);">Текст</span>
<span style="left:276px;top:5.5px;font-size:9.2px;color:#d6d6d6;font-weight:normal;font-style:normal;transform:scaleX(0.9037);">Выделение</span>
<span style="left:332px;top:5.5px;font-size:9.2px;color:#d6d6d6;font-weight:normal;font-style:normal;transform:scaleX(0.9393);">Фильтр</span>
<span style="left:373px;top:5.5px;font-size:9.2px;color:#d6d6d6;font-weight:normal;font-style:normal;transform:scaleX(0.9362);">3D</span>
<span style="left:396px;top:5.5px;font-size:9.2px;color:#d6d6d6;font-weight:normal;font-style:normal;transform:scaleX(0.9531);">Просмотр</span>
<span style="left:449px;top:5.5px;font-size:9.2px;color:#d6d6d6;font-weight:normal;font-style:normal;transform:scaleX(0.9832);">Окно</span>
<span style="left:482px;top:5.5px;font-size:9.2px;color:#d6d6d6;font-weight:normal;font-style:normal;transform:scaleX(0.8877);">Справка</span>
<span style="left:57.3px;top:34.8px;font-size:7px;color:#d0d0d0;font-weight:normal;font-style:normal;transform:scaleX(0.8337);">20</span>
<span style="left:112px;top:28.0px;font-size:8.5px;color:#a6a6a6;font-weight:normal;font-style:normal;transform:scaleX(0.8048);">Режим:</span>
<span style="left:146px;top:28.0px;font-size:8.5px;color:#dedede;font-weight:normal;font-style:normal;transform:scaleX(0.8022);">Нормальный</span>
<span style="left:240px;top:28.0px;font-size:8.5px;color:#a6a6a6;font-weight:normal;font-style:normal;transform:scaleX(0.8380);">Непрозр.:</span>
<span style="left:280px;top:28.0px;font-size:8.5px;color:#dedede;font-weight:normal;font-style:normal;transform:scaleX(0.8228);">99%</span>
<span style="left:348px;top:28.0px;font-size:8.5px;color:#a6a6a6;font-weight:normal;font-style:normal;transform:scaleX(0.7988);">Наж.:</span>
<span style="left:373px;top:28.0px;font-size:8.5px;color:#dedede;font-weight:normal;font-style:normal;transform:scaleX(0.8046);">100%</span>
<span style="left:917.5px;top:28.9px;font-size:7.5px;color:#e0e0e0;font-weight:normal;font-style:normal;transform:scaleX(0.8860);">3D</span>
<span style="left:60px;top:51.3px;font-size:9px;color:#e4e4e4;font-weight:bold;font-style:normal;transform:scaleX(0.8765);">Без имени-112.jpg @ 20,3% (RGB/8) *</span>
<span style="left:228px;top:51.3px;font-size:9px;color:#8e8e8e;font-weight:bold;font-style:normal;transform:scaleX(0.8597);">Без имени-1 @ 16,7% (Слой 2, RGB/8) *</span>
<span style="left:58px;top:601.4px;font-size:8.5px;color:#d8d8d8;font-weight:normal;font-style:normal;transform:scaleX(0.7974);">20,33%</span>
<span style="left:133px;top:601.4px;font-size:8.5px;color:#9c9c9c;font-weight:normal;font-style:normal;transform:scaleX(0.8158);">Док: 40,1M/22,2M</span>
<span style="left:763.8px;top:63.0px;font-size:13.5px;color:#dcdcdc;font-weight:normal;font-style:normal;transform:scaleX(0.8652);">A</span>
<span style="left:790px;top:59.2px;font-size:8px;color:#f0f0f0;font-weight:bold;font-style:normal;transform:scaleX(0.8456);">Цвет</span>
<span style="left:820px;top:59.2px;font-size:8px;color:#a2a2a2;font-weight:bold;font-style:normal;transform:scaleX(0.8533);">Образцы</span>
<span style="left:789px;top:340.3px;font-size:8px;color:#a4a4a4;font-weight:bold;font-style:normal;transform:scaleX(0.9288);">История</span>
<span style="left:832px;top:340.3px;font-size:8px;color:#a4a4a4;font-weight:bold;font-style:normal;transform:scaleX(0.8581);">Device Preview</span>
<span style="left:896px;top:340.3px;font-size:8px;color:#a4a4a4;font-weight:bold;font-style:normal;transform:scaleX(0.9771);">3D</span>
<span style="left:920px;top:340.3px;font-size:8px;color:#f0f0f0;font-weight:bold;font-style:normal;transform:scaleX(0.8267);">Слои</span>
<span style="left:951px;top:340.3px;font-size:8px;color:#a4a4a4;font-weight:bold;font-style:normal;transform:scaleX(0.8653);">Каналы</span>
<span style="left:801px;top:362.0px;font-size:8px;color:#808080;font-weight:normal;font-style:normal;transform:scaleX(0.8975);">Вид</span>
<span style="left:939px;top:360.8px;font-size:11px;color:#c0c0c0;font-weight:bold;font-style:normal;transform:scaleX(1.1574);font-family:&quot;Liberation Serif&quot;,serif;">T</span>
<span style="left:791px;top:381.8px;font-size:8px;color:#767676;font-weight:normal;font-style:normal;transform:scaleX(0.8771);">Обычные</span>
<span style="left:925px;top:381.8px;font-size:8px;color:#767676;font-weight:normal;font-style:normal;transform:scaleX(0.8750);">Непрозрачность:</span>
<span style="left:988px;top:381.8px;font-size:8px;color:#666;font-weight:normal;font-style:normal;transform:scaleX(0.7328);">100%</span>
<span style="left:787px;top:400.5px;font-size:8px;color:#767676;font-weight:normal;font-style:normal;transform:scaleX(0.9125);">Закрепить:</span>
<span style="left:953px;top:400.5px;font-size:8px;color:#767676;font-weight:normal;font-style:normal;transform:scaleX(0.8481);">Заливка:</span>
<span style="left:988px;top:400.5px;font-size:8px;color:#666;font-weight:normal;font-style:normal;transform:scaleX(0.7328);">100%</span>
<span style="left:836px;top:425.2px;font-size:8.5px;color:#f0f0f0;font-weight:normal;font-style:italic;transform:scaleX(0.8039);">Фон</span>
<span style="left:900px;top:597.8px;font-size:10px;color:#9a9a9a;font-weight:normal;font-style:italic;transform:scaleX(1.0528);font-family:&quot;Liberation Serif&quot;,serif;">fx</span>
<span style="left:146px;top:619.8px;font-size:12px;color:#4fa2e6;font-weight:normal;font-style:normal;transform:scaleX(0.8205);">Ps</span>
<span style="left:838px;top:619.5px;font-size:9.5px;color:#e6e6e6;font-weight:normal;font-style:normal;transform:scaleX(0.9101);">RU</span>
<span style="left:977.5px;top:616.5px;font-size:9.5px;color:#f0f0f0;font-weight:normal;font-style:normal;transform:scaleX(0.8410);">18:29</span>
<span style="left:968px;top:629.0px;font-size:9.5px;color:#f0f0f0;font-weight:normal;font-style:normal;transform:scaleX(0.7887);">20.10.2016</span>
</div>
</body></html>
